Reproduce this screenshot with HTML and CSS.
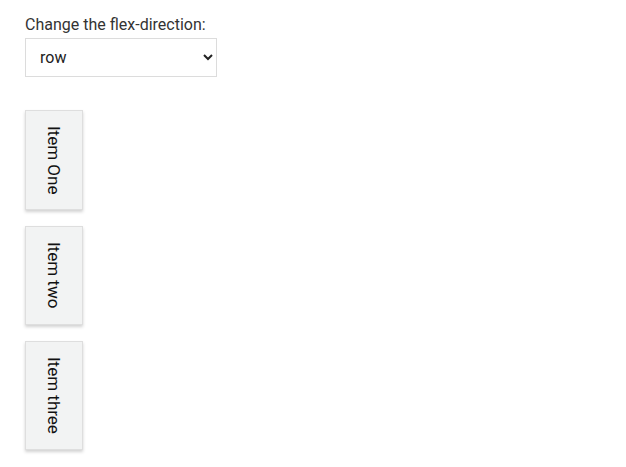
FILE: index.html
```html
<!DOCTYPE html>
<html>
<head>
<meta charset="utf-8">
<link rel="stylesheet" href="styles.css">
</head>
<body>
<div class="page">
  <div class="controls">
    <label class="label" for="dir">Change the flex-direction:</label>
    <select id="dir" class="select">
      <option>row</option>
      <option>row-reverse</option>
      <option>column</option>
      <option>column-reverse</option>
    </select>
  </div>
  <div class="box">
    <div class="item">Item One</div>
    <div class="item">Item two</div>
    <div class="item">Item three</div>
  </div>
</div>
</body>
</html>
```
FILE: styles.css
```css
html, body {
  margin: 0;
  padding: 0;
  background: #fff;
}
body {
  font-family: Roboto, "Liberation Sans", sans-serif;
  font-size: 16px;
  color: #222;
}
.page {
  padding: 15px 25px;
}
.controls {
  display: flex;
  flex-direction: column;
  align-items: flex-start;
  gap: 4px;
}
.label {
  line-height: 19px;
  color: #333;
}
.select {
  width: 192px;
  height: 39px;
  font-family: Roboto, "Liberation Sans", sans-serif;
  font-size: 16px;
  color: #222;
  background: #fff;
  border: 1px solid #dcdcdc;
  border-radius: 0;
  padding: 0 8px 0 10px;
}
.box {
  margin-top: 33px;
  display: flex;
  flex-direction: column;
  align-items: flex-start;
  gap: 16px;
}
.item {
  writing-mode: vertical-rl;
  font-family: Roboto, "Liberation Sans", sans-serif;
  font-size: 17px;
  background: #f2f3f3;
  border: 1px solid #dedede;
  box-shadow: 0 2px 3px rgba(0,0,0,0.18);
  padding: 15px 16px;
  line-height: 24px;
  color: #111;
}
```
